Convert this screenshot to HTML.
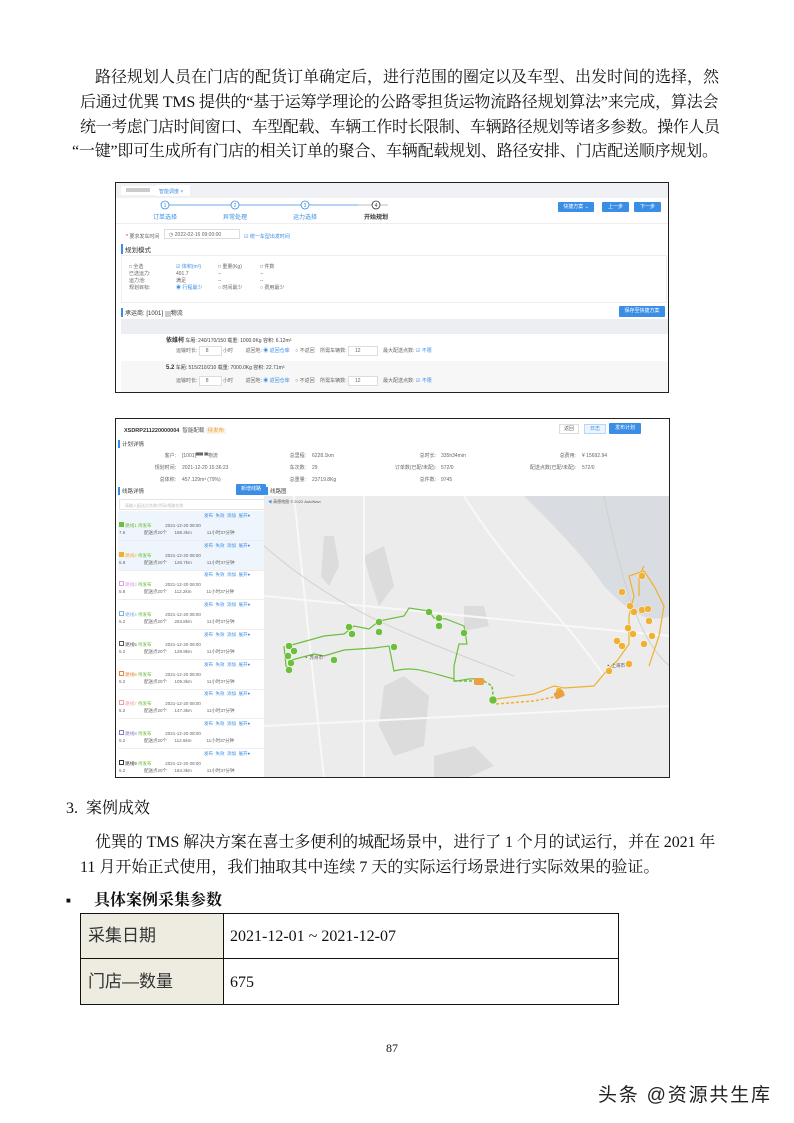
<!DOCTYPE html>
<html><head><meta charset="utf-8"><style>
*{margin:0;padding:0;box-sizing:border-box}
body{width:794px;height:1123px;background:#fff;position:relative;overflow:hidden;font-family:"Liberation Serif","Noto Serif CJK SC",serif;color:#111}
.a{position:absolute;white-space:nowrap}
.p{font-size:16px;line-height:22px}
.s{font-family:"Liberation Sans","Noto Sans CJK SC",sans-serif}
.t{font-size:5px;color:#666}
.b{background:#3a8ee6;color:#fff;font-size:5px;text-align:center;border-radius:1px}
</style></head><body>
<div class="a p" style="left:95px;top:67px;letter-spacing:0px">路径规划人员在门店的配货订单确定后，进行范围的圈定以及车型、出发时间的选择，然</div>
<div class="a p" style="left:80px;top:92px;letter-spacing:-0.2px">后通过优巽 TMS 提供的“基于运筹学理论的公路零担货运物流路径规划算法”来完成，算法会</div>
<div class="a p" style="left:80px;top:117px;letter-spacing:-0.4px">统一考虑门店时间窗口、车型配载、车辆工作时长限制、车辆路径规划等诸多参数。操作人员</div>
<div class="a p" style="left:72px;top:141px;letter-spacing:-0.2px">“一键”即可生成所有门店的相关订单的聚合、车辆配载规划、路径安排、门店配送顺序规划。</div>

<!-- screenshot 1 -->
<div class="a s" style="left:115px;top:182px;width:554px;height:211px;border:1px solid #222;background:#fff;overflow:hidden">
 <div class="a" style="left:0;top:0;width:552px;height:15px;background:#f0f1f5"></div>
 <div class="a" style="left:5px;top:3px;width:35px;height:9px;background:#fff"></div>
 <div class="a" style="left:10px;top:5px;width:24px;height:4px;background:#ccc"></div>
 <div class="a t" style="left:40px;top:2px;width:34px;height:11px;background:#fff;padding:3px;color:#3a8ee6">智能调度 ×</div>
 <svg class="a" style="left:0;top:15px" width="552" height="26">
  <line x1="52" y1="7" x2="242" y2="7" stroke="#3a8ee6" stroke-width="0.8"/>
  <line x1="242" y1="7" x2="272" y2="7" stroke="#aaa" stroke-width="0.8"/>
  <g fill="#fff" stroke="#3a8ee6" stroke-width="0.8"><circle cx="49" cy="7" r="4"/><circle cx="119" cy="7" r="4"/><circle cx="189" cy="7" r="4"/></g>
  <circle cx="260" cy="7" r="4" fill="#fff" stroke="#333" stroke-width="0.8"/>
  <g font-size="5" font-family="Liberation Sans" text-anchor="middle"><text x="49" y="9" fill="#3a8ee6">1</text><text x="119" y="9" fill="#3a8ee6">2</text><text x="189" y="9" fill="#3a8ee6">3</text><text x="260" y="9" fill="#333">4</text></g>
  <g font-size="6" font-family="Noto Sans CJK SC" text-anchor="middle"><text x="49" y="21" fill="#3a8ee6">订单选择</text><text x="119" y="21" fill="#3a8ee6">异常处理</text><text x="189" y="21" fill="#3a8ee6">运力选择</text><text x="260" y="21" fill="#333" font-weight="bold">开始规划</text></g>
 </svg>
 <div class="a b" style="left:442px;top:19px;width:36px;height:10px;line-height:10px">快捷方案 ⌄</div>
 <div class="a b" style="left:486px;top:19px;width:27px;height:10px;line-height:10px">上一步</div>
 <div class="a b" style="left:518px;top:19px;width:27px;height:10px;line-height:10px">下一步</div>
 <div class="a" style="left:0;top:40px;width:552px;height:1px;background:#eee"></div>
 <div class="a t" style="left:10px;top:50px"><span style="color:red">*</span> 要求发车时间</div>
 <div class="a t" style="left:48px;top:46px;width:76px;height:10px;border:1px solid #ddd;padding:2px 4px">◷ 2022-02-16 09:00:00</div>
 <div class="a t" style="left:128px;top:50px;color:#3a8ee6">☑ 统一车型出发时间</div>
 <div class="a" style="left:5px;top:61px;font-size:6.5px;color:#333;border-left:2px solid #3a8ee6;padding-left:2px">规划模式</div>
 <div class="a" style="left:5px;top:72px;width:546px;height:48px;border:1px solid #eee"></div>
 <div class="a t" style="left:13px;top:81px;line-height:7px">□ 全选<br>已选运力:<br>运力池:<br>规划目标:</div>
 <div class="a t" style="left:60px;top:81px;line-height:7px"><span style="color:#3a8ee6">☑ 体积(m³)</span><br>491.7<br>满足<br><span style="color:#3a8ee6">◉ 行程最少</span></div>
 <div class="a t" style="left:102px;top:81px;line-height:7px">□ 重量(Kg)<br>--<br>--<br>○ 时间最少</div>
 <div class="a t" style="left:144px;top:81px;line-height:7px">□ 件数<br>--<br>--<br>○ 费用最少</div>
 <div class="a" style="left:5px;top:125px;font-size:6px;color:#333;border-left:2px solid #3a8ee6;padding-left:2px">承运商: [1001] <span style="background:#ccc;color:#ccc">xx</span>物流</div>
 <div class="a b" style="left:503px;top:123px;width:46px;height:11px;line-height:11px">保存至快捷方案</div>
 <div class="a" style="left:5px;top:136px;width:547px;height:15px;background:#eceef2"></div>
 <div class="a t" style="left:50px;top:152px;color:#444"><b style="font-size:6px;color:#333">依维柯</b> 车厢: 240/170/150 载重: 1000.0Kg 容积: 6.12m³</div>
 <div class="a t" style="left:60px;top:164px">运输时长: <span style="border:1px solid #ddd;padding:1px 12px 1px 6px">8</span> 小时 &nbsp;&nbsp;&nbsp;&nbsp;&nbsp;&nbsp;&nbsp; 返回地: <span style="color:#3a8ee6">◉ 返回仓库</span> &nbsp;&nbsp; ○ 不返回 &nbsp;&nbsp; 所需车辆数: <span style="border:1px solid #ddd;padding:1px 16px 1px 6px">12</span> &nbsp;&nbsp; 最大配送点数: <span style="color:#3a8ee6">☑ 不限</span></div>
 <div class="a" style="left:5px;top:178px;width:547px;height:32px;background:#f7f7f7"></div>
 <div class="a t" style="left:50px;top:181px;color:#444"><b style="font-size:6px;color:#333">5.2</b> 车厢: 515/210/210 载重: 7000.0Kg 容积: 22.71m³</div>
 <div class="a t" style="left:60px;top:194px">运输时长: <span style="border:1px solid #ddd;padding:1px 12px 1px 6px;background:#fff">8</span> 小时 &nbsp;&nbsp;&nbsp;&nbsp;&nbsp;&nbsp;&nbsp; 返回地: <span style="color:#3a8ee6">◉ 返回仓库</span> &nbsp;&nbsp; ○ 不返回 &nbsp;&nbsp; 所需车辆数: <span style="border:1px solid #ddd;padding:1px 16px 1px 6px;background:#fff">12</span> &nbsp;&nbsp; 最大配送点数: <span style="color:#3a8ee6">☑ 不限</span></div>
</div>

<!-- screenshot 2 -->
<div class="a s" style="left:115px;top:418px;width:555px;height:360px;border:1px solid #222;background:#fff;overflow:hidden">
 <div class="a" style="left:8px;top:7px;font-size:5.5px;font-weight:bold;color:#333">XSDRP211220000004 <span style="font-weight:normal;color:#555">&nbsp;智能配载</span> <span style="color:#e6a23c;background:#fdf3e3;font-weight:normal">&nbsp;待发布&nbsp;</span></div>
 <div class="a t" style="left:443px;top:5px;width:20px;height:10px;border:1px solid #ddd;text-align:center;line-height:9px">返回</div>
 <div class="a t" style="left:468px;top:5px;width:22px;height:10px;border:1px solid #b3d8ff;background:#ecf5ff;color:#3a8ee6;text-align:center;line-height:9px">日志</div>
 <div class="a b" style="left:493px;top:4px;width:32px;height:11px;line-height:11px">发布计划</div>
 <div class="a" style="left:2px;top:21px;font-size:5.5px;color:#444;border-left:2px solid #3a8ee6;padding-left:2px">计划详情</div>
 <div class="a t" style="left:30px;top:31px;line-height:12px;text-align:right;width:30px">客户:<br>规划时间:<br>总体积:</div>
 <div class="a t" style="left:66px;top:31px;line-height:12px">[1001]▀▀ ▀物流<br>2021-12-20 15:36:23<br>457.129m³ (79%)</div>
 <div class="a t" style="left:160px;top:31px;line-height:12px;text-align:right;width:30px">总里程:<br>车次数:<br>总重量:</div>
 <div class="a t" style="left:196px;top:31px;line-height:12px">6228.1km<br>29<br>23719.8Kg</div>
 <div class="a t" style="left:260px;top:31px;line-height:12px;text-align:right;width:60px">总时长:<br>订单数(已配/未配):<br>总件数:</div>
 <div class="a t" style="left:325px;top:31px;line-height:12px">335h34min<br>572/0<br>9745</div>
 <div class="a t" style="left:400px;top:31px;line-height:12px;text-align:right;width:60px">总费用:<br>配送点数(已配/未配):<br></div>
 <div class="a t" style="left:466px;top:31px;line-height:12px">¥ 15692.94<br>572/0</div>
 <div class="a" style="left:2px;top:68px;font-size:5.5px;color:#444;border-left:2px solid #3a8ee6;padding-left:2px">线路详情</div>
 <div class="a b" style="left:120px;top:65px;width:30px;height:11px;line-height:11px">新增线路</div>
 <div class="a" style="left:150px;top:68px;font-size:5.5px;color:#444;border-left:2px solid #3a8ee6;padding-left:2px">线路图</div>
 <div class="a t" style="left:3px;top:80px;width:146px;height:11px;border:1px solid #e4e4e4;padding:3px 5px;color:#bbb;font-size:4px">请输入配送点名称/代码/线路名称</div>
 <div class="a" style="left:2px;top:92px;width:147px;height:60px;background:#eef5fd"></div>
 <div class="a" style="left:150px;top:92px;width:3px;height:60px;background:#ccc"></div>
 <div id="list"></div>
 <svg class="a" style="left:148px;top:77px" width="406" height="283">
  <rect width="406" height="283" fill="#ececec"/>
  <path d="M260 0 L406 0 406 120 C380 130 360 110 340 90 C320 60 290 30 260 0Z" fill="#d9dce0"/>
  <path d="M60 40 l10 0 5 30 -10 20 -8-10Z M100 60 l20 -10 10 40 -15 20 -10 -30Z M120 190 l20 -10 25 20 -5 50 -30 10 -15 -30Z M170 260 l40 -10 20 20 -30 13 -30 0Z M200 110 l20 0 5 20 -25 5Z" fill="#dcdcdc"/>
  <path d="M100 0 L100 283 M0 100 L406 140 M200 0 C250 80 300 120 340 180 M0 230 L406 210 M30 0 L60 283" stroke="#f8f8f8" stroke-width="2" fill="none"/>
  <path d="M0 50 C80 120 150 140 250 180 M340 0 C360 100 380 150 406 170" stroke="#d0d0d0" stroke-width="1" fill="none"/>
  <g fill="none" stroke="#6cbf3a" stroke-width="1.2">
   <path d="M24 150 L60 140 80 138 90 130 105 133 115 125 140 120 145 112 165 115 170 122 182 123 200 130 203 148 195 148 190 170 190 185 C200 185 208 180 220 185"/>
   <path d="M24 165 L50 158 60 160 80 154 110 152 125 150 130 175 C150 170 160 175 190 183"/>
   <path d="M20 150 L22 170 27 175"/>
  </g>
  <path d="M190 185 L220 185 228 190 230 207" stroke="#6cbf3a" stroke-width="1.5" stroke-dasharray="3 2" fill="none"/>
  <g fill="none" stroke="#f0b030" stroke-width="1.2">
   <path d="M232 203 L270 198 290 190 300 192 330 190 345 172 353 165 365 148 365 120 370 100 365 80 380 75 390 90 400 110 395 140 385 170"/>
   <path d="M380 70 L375 80 375 100"/>
  </g>
  <path d="M232 208 L270 205 295 200" stroke="#f0b030" stroke-width="1.5" stroke-dasharray="3 2" fill="none"/>
  <g fill="#6cbf3a" stroke="#fff" stroke-width="0.5">
   <circle cx="85" cy="131" r="3.5"/><circle cx="88" cy="138" r="3.5"/><circle cx="115" cy="126" r="3.5"/><circle cx="115" cy="136" r="3.5"/><circle cx="165" cy="116" r="3.5"/><circle cx="175" cy="122" r="3.5"/><circle cx="175" cy="130" r="3.5"/><circle cx="200" cy="137" r="3.5"/><circle cx="130" cy="151" r="3.5"/><circle cx="70" cy="164" r="3.5"/><circle cx="25" cy="150" r="3.5"/><circle cx="30" cy="155" r="3.5"/><circle cx="24" cy="160" r="3.5"/><circle cx="27" cy="167" r="3.5"/><circle cx="25" cy="174" r="3.5"/><circle cx="229" cy="204" r="4"/>
  </g>
  <g fill="#f0b030" stroke="#fff" stroke-width="0.5">
   <circle cx="378" cy="80" r="3.5"/><circle cx="358" cy="96" r="3.5"/><circle cx="366" cy="110" r="3.5"/><circle cx="370" cy="116" r="3.5"/><circle cx="378" cy="114" r="3.5"/><circle cx="384" cy="113" r="3.5"/><circle cx="385" cy="125" r="3.5"/><circle cx="364" cy="132" r="3.5"/><circle cx="369" cy="138" r="3.5"/><circle cx="380" cy="148" r="3.5"/><circle cx="388" cy="140" r="3.5"/><circle cx="353" cy="145" r="3.5"/><circle cx="358" cy="150" r="3.5"/><circle cx="365" cy="168" r="3.5"/><circle cx="345" cy="175" r="3.5"/><circle cx="295" cy="195" r="3.5"/>
  </g>
  <rect x="210" y="182" width="10" height="7" rx="2" fill="#e8a040"/>
  <rect x="290" y="195" width="10" height="7" rx="2" fill="#e8a040" transform="rotate(-25 295 198)"/>
  <text x="40" y="163" font-size="4.5" fill="#555" font-family="Noto Sans CJK SC">▪ 苏州市</text>
  <text x="342" y="171" font-size="4.5" fill="#555" font-family="Noto Sans CJK SC">▪ 上海市</text>
  <text x="4" y="7" font-size="4" fill="#555" font-family="Liberation Sans"><tspan fill="#3a8ee6">◀</tspan> 高德地图 © 2022 AutoNavi</text>
 </svg>
</div>
<script>
var h='';var names=['路线1','路线2','路线3','路线4','路线5','路线6','路线7','路线8','路线9'];
var col=['#6cbf3a','#f0b030','#d8a0e0','#80b0e0','#555','#f08030','#f0a0a0','#8080c0','#333'];
var km=['188.3km','126.7km','112.2km','263.8km','128.9km','109.3km','147.3km','112.5km','184.3km'];
var v=['7.6','5.8','5.8','5.2','5.2','5.2','5.2','5.2','5.2'];
for(var i=0;i<9;i++){var y=94+i*29.7;
h+='<div class="a t" style="left:88px;top:'+y+'px;color:#3a8ee6;font-size:4.5px">发布&nbsp;&nbsp;失效&nbsp;&nbsp;添加&nbsp;&nbsp;展开<b>●</b></div>';
h+='<div class="a t" style="left:3px;top:'+(y+9)+'px;font-size:4.5px;line-height:7px"><span style="display:inline-block;width:5px;height:5px;border:0.6px solid '+col[i]+';'+(i<2?'background:'+col[i]:'')+'"></span> <span style="color:'+col[i]+'">'+names[i]+'</span> <span style="color:#6cbf3a">待发布</span> &nbsp;&nbsp;&nbsp;&nbsp;&nbsp;&nbsp;&nbsp;&nbsp;&nbsp;&nbsp;2021-12-20 08:00<br>'+v[i]+' &nbsp;&nbsp;&nbsp;&nbsp;&nbsp;&nbsp;&nbsp;&nbsp;&nbsp;&nbsp;&nbsp;&nbsp;&nbsp;&nbsp;配送点20个 &nbsp;&nbsp;&nbsp;&nbsp;&nbsp;'+km[i]+' &nbsp;&nbsp;&nbsp;&nbsp;&nbsp;&nbsp;&nbsp;&nbsp;&nbsp;&nbsp;&nbsp;11小时37分钟</div>';
h+='<div class="a" style="left:2px;top:'+(y+27)+'px;width:146px;height:1px;background:#eee"></div>';}
document.getElementById('list').innerHTML=h;
</script>

<div class="a" style="left:66px;top:798px;font-size:16px;line-height:22px">3.&nbsp; 案例成效</div>
<div class="a p" style="left:95px;top:832px;letter-spacing:-0.1px">优巽的 TMS 解决方案在喜士多便利的城配场景中，进行了 1 个月的试运行，并在 2021 年</div>
<div class="a p" style="left:80px;top:857px">11 月开始正式使用，我们抽取其中连续 7 天的实际运行场景进行实际效果的验证。</div>
<div class="a" style="left:66px;top:896px;font-size:8px">■</div>
<div class="a" style="left:94px;top:890px;font-size:16px;line-height:22px;font-weight:bold">具体案例采集参数</div>
<div class="a" style="left:80px;top:913px;width:539px;height:92px;border:1px solid #111">
 <div class="a" style="left:0;top:0;width:143px;height:90px;background:#eeebe1;border-right:1px solid #111"></div>
 <div class="a" style="left:0;top:44px;width:537px;height:1px;background:#111"></div>
 <div class="a" style="left:7px;top:11px;font-size:17px;line-height:22px;color:#333;font-family:'Liberation Sans','Noto Sans CJK SC',sans-serif">采集日期</div>
 <div class="a" style="left:7px;top:57px;font-size:17px;line-height:22px;color:#333;font-family:'Liberation Sans','Noto Sans CJK SC',sans-serif">门店—数量</div>
 <div class="a" style="left:149px;top:12px;font-size:16px;line-height:22px">2021-12-01 ~ 2021-12-07</div>
 <div class="a" style="left:149px;top:58px;font-size:16px;line-height:22px">675</div>
</div>
<div class="a" style="left:386px;top:1041px;font-size:12px">87</div>
<div class="a s" style="left:598px;top:1084px;font-size:19px;line-height:24px;letter-spacing:1.8px;color:#222">头条 @资源共生库</div>
</body></html>
